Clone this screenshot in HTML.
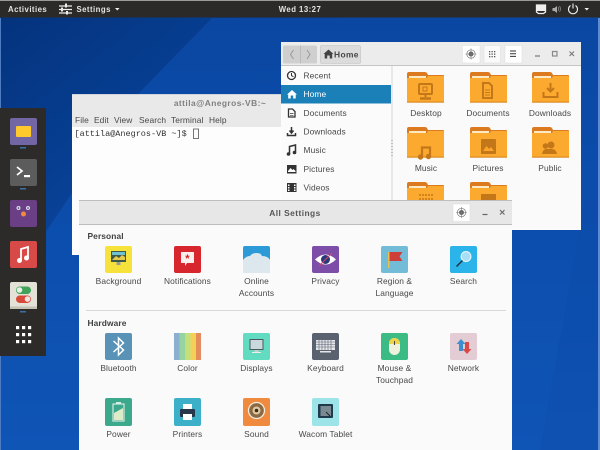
<!DOCTYPE html>
<html><head><meta charset="utf-8"><style>
html,body{margin:0;padding:0;background:#0b4aa8;width:600px;height:450px;overflow:hidden}
svg{display:block;filter:blur(.3px)}
text{font-family:"Liberation Sans",sans-serif;font-size:8.4px;fill:#484848;letter-spacing:.1px}
.c{text-anchor:middle}
.b{font-weight:bold;fill:#404040}
.t{fill:#e4e4e4;font-weight:bold;font-size:7.8px;letter-spacing:.45px}
.h{fill:#555;font-weight:bold;letter-spacing:.45px}
.m{font-family:"Liberation Mono",monospace;font-size:8.5px;letter-spacing:0;fill:#333}
</style></head><body>
<svg width="600" height="450" viewBox="0 0 600 450" xmlns="http://www.w3.org/2000/svg">
<defs>
<linearGradient id="bg" x1="0" y1="0" x2="1" y2="1"><stop offset="0" stop-color="#04327c"/><stop offset=".45" stop-color="#0a4aa6"/><stop offset="1" stop-color="#0f56b8"/></linearGradient>
<linearGradient id="rt" x1="0" y1="0" x2="0" y2="1"><stop offset="0" stop-color="#0a47a2"/><stop offset=".45" stop-color="#0c4dac"/><stop offset="1" stop-color="#0f55b6"/></linearGradient>
<g id="folder">
<path d="M0 2q0-2 2-2h16q2 0 3 3h15q1 0 1 1v5H0z" fill="#dc7a20"/>
<rect x="2" y="4" width="17" height="2" fill="#fde9c4"/>
<path d="M0 6h20l1-2h15q1 0 1 1v25H0z" fill="#fca92f"/>
<rect x="0" y="29.500" width="37" height="1.200" fill="#dc8a20"/>
</g>
</defs>
<rect width="600" height="450" fill="url(#bg)"/>
<polygon points="212,18 600,18 600,450 0,450 0,300 140,92" fill="url(#rt)"/>
<polygon points="585,200 600,200 600,450 540,450" fill="#0a48a2" opacity=".25"/>
<rect x="598" y="18" width="2" height="432" fill="#5f8bd0"/>
<rect y="18" width="1" height="432" fill="#4f7cc0"/>

<!-- top bar -->
<rect width="600" height="17.500" fill="#2b2a29"/>
<rect width="600" height="1" fill="#9a9a9a"/>
<text x="8" y="12" class="t">Activities</text>
<g stroke="#eee" stroke-width="1.200" fill="#eee"><path d="M59 6h13M59 9.500h13M59 13h13"/><rect x="65" y="3.500" width="2" height="4" stroke="none"/><rect x="61" y="7.500" width="2" height="4" stroke="none"/><rect x="66" y="11" width="2" height="3.500" stroke="none"/></g>
<text x="76.500" y="12" class="t">Settings</text>
<path d="M115 8h4.500l-2.200 2.500z" fill="#eee"/>
<text x="300" y="12" class="t c">Wed 13:27</text>
<path d="M536.500 5h9v7l-2 1.500h-5l-2-1.500z" fill="none" stroke="#eee" stroke-width="1.300"/><path d="M537 5h8v6h-8z" fill="#eee"/>
<path d="M552.500 8h2l2.500-2v7l-2.500-2h-2z" fill="#aaa"/><path d="M558 7q1.500 2 0 3.800M559.500 6q2 3 0 5.800" stroke="#888" fill="none" stroke-width=".8"/>
<path d="M570.500 5.500a4.500 4.500 0 1 0 5 0" fill="none" stroke="#eee" stroke-width="1.100"/><path d="M573 3.500v5" stroke="#eee" stroke-width="1.100"/>
<path d="M584.500 8h4.500l-2.200 2.500z" fill="#eee"/>

<!-- dock -->
<rect x="0" y="108" width="46" height="248" fill="#2c2b2a"/>
<rect x="10" y="118" width="27" height="27" rx="2" fill="#7266a4"/>
<rect x="16" y="126" width="15" height="11" rx="1" fill="#fdc92d"/>
<rect x="20" y="147" width="6" height="1.500" fill="#3c6fa8"/>
<rect x="10" y="159" width="27" height="27" rx="2" fill="#5c5c5c"/>
<path d="M17 167l5 4-5 4" stroke="#fff" stroke-width="1.700" fill="none"/><rect x="24" y="175" width="6" height="2.200" fill="#fff"/>
<rect x="20" y="188" width="6" height="1.500" fill="#3c6fa8"/>
<rect x="10" y="200" width="27" height="27" rx="2" fill="#6a3f85"/>
<circle cx="18.500" cy="208" r="2" fill="#dde"/><circle cx="28" cy="208" r="2" fill="#dde"/><circle cx="18.500" cy="208" r=".8" fill="#334"/><circle cx="28" cy="208" r=".8" fill="#334"/><circle cx="23.500" cy="214" r="2.500" fill="#f08c3c"/>
<rect x="10" y="241" width="27" height="27" rx="2" fill="#d84a48"/>
<path d="M21 261v-12l7-2v11" stroke="#fff" stroke-width="1.800" fill="none"/><circle cx="19.500" cy="260.500" r="2.500" fill="#fff"/><circle cx="26.500" cy="258" r="2.500" fill="#fff"/>
<rect x="10" y="282" width="27" height="27" rx="2" fill="#e4e2d6"/><rect x="10" y="306.500" width="27" height="2.500" fill="#c4c2b4"/>
<rect x="16" y="286.500" width="15" height="7.500" rx="3.700" fill="#3fa35a"/><circle cx="19.500" cy="290" r="2.800" fill="#e8f0e8"/>
<rect x="16" y="295.500" width="15" height="7.500" rx="3.700" fill="#d9493a"/><circle cx="27.500" cy="299" r="2.800" fill="#f0e4e0"/>
<rect x="20" y="311" width="6" height="1.500" fill="#3c6fa8"/>
<g fill="#fff"><rect x="16" y="326" width="3.200" height="3.200"/><rect x="22" y="326" width="3.200" height="3.200"/><rect x="28" y="326" width="3.200" height="3.200"/><rect x="16" y="333" width="3.200" height="3.200"/><rect x="22" y="333" width="3.200" height="3.200"/><rect x="28" y="333" width="3.200" height="3.200"/><rect x="16" y="340" width="3.200" height="3.200"/><rect x="22" y="340" width="3.200" height="3.200"/><rect x="28" y="340" width="3.200" height="3.200"/></g>

<!-- terminal -->
<rect x="72" y="94" width="215" height="161" fill="#fdfdfd"/>
<rect x="72" y="94" width="215" height="33" fill="#e9e9e9"/>
<rect x="72" y="94" width="215" height="1" fill="#cfd4dc"/>
<text x="220" y="106" class="c h" style="fill:#808080">attila@Anegros-VB:~</text>
<text x="75" y="123">File</text><text x="94" y="123">Edit</text><text x="114" y="123">View</text><text x="139" y="123">Search</text><text x="171" y="123">Terminal</text><text x="209" y="123">Help</text>
<text x="74.500" y="136" class="m">[attila@Anegros-VB ~]$</text>
<rect x="193.500" y="129" width="5" height="9.500" fill="none" stroke="#555" stroke-width=".8"/>

<!-- files -->
<rect x="281" y="42" width="300" height="188" fill="#fafafa"/>
<rect x="281" y="42" width="300" height="23.500" fill="#ececec"/>
<rect x="281" y="65" width="300" height="1" fill="#c6c6c6"/>
<rect x="283" y="45.500" width="34" height="18" rx="1.500" fill="#cfcfcf"/><rect x="300" y="45.500" width="1" height="18" fill="#bbb"/>
<path d="M293.500 50l-3 4.500 3 4.500M307 50l3 4.500-3 4.500" fill="none" stroke="#9a9a9a"/>
<rect x="320.500" y="45.500" width="40" height="18" rx="1.500" fill="#dcdcdc" stroke="#c0c0c0" stroke-width=".6"/>
<path d="M323.500 54l5-4.500 5 4.500h-1.300v4.500h-2.500v-3h-2.500v3h-2.500v-4.500z" fill="#444"/>
<text x="334" y="57.500" style="fill:#444;font-weight:bold;letter-spacing:.4px">Home</text>
<rect x="462.500" y="45.500" width="17.500" height="17.500" fill="#fff" stroke="#ddd" stroke-width=".5"/>
<circle cx="471" cy="54" r="2.500" fill="#666"/><circle cx="471" cy="54" r="4.200" fill="none" stroke="#777" stroke-width=".7"/><path d="M471 48.500v11M465.500 54h11" stroke="#777" stroke-width=".6"/>
<rect x="484" y="45.500" width="16.500" height="17.500" fill="#fafafa" stroke="#ddd" stroke-width=".5"/>
<g fill="#555"><rect x="489" y="51" width="1.300" height="1.300"/><rect x="491.500" y="51" width="1.300" height="1.300"/><rect x="494" y="51" width="1.300" height="1.300"/><rect x="489" y="53.500" width="1.300" height="1.300"/><rect x="491.500" y="53.500" width="1.300" height="1.300"/><rect x="494" y="53.500" width="1.300" height="1.300"/><rect x="489" y="56" width="1.300" height="1.300"/><rect x="491.500" y="56" width="1.300" height="1.300"/><rect x="494" y="56" width="1.300" height="1.300"/></g>
<rect x="505" y="45.500" width="17" height="17.500" fill="#fff" stroke="#ddd" stroke-width=".5"/>
<path d="M510 51h6M510 53.700h6M510 56.400h6" stroke="#333" stroke-width="1"/>
<path d="M535 56h5" stroke="#777" stroke-width="1.200"/>
<rect x="552.500" y="51.500" width="4.500" height="4.500" fill="none" stroke="#888" stroke-width="1.200"/>
<path d="M569.500 51.500l4.500 4.500M574 51.500l-4.500 4.500" stroke="#777" stroke-width="1.100"/>
<!-- sidebar -->
<rect x="281" y="66" width="110" height="164" fill="#fbfbfb"/>
<rect x="391" y="66" width="2" height="164" fill="#e8e8e8"/>
<path d="M392 140v18" stroke="#999" stroke-width="1" stroke-dasharray="1 2"/>
<rect x="281" y="85" width="110" height="18.500" fill="#1b80b7"/>
<circle cx="291.500" cy="75.500" r="4" fill="none" stroke="#333" stroke-width="1.300"/><path d="M291.500 73v2.700l2 1" fill="none" stroke="#333"/>
<text x="303.500" y="78.500">Recent</text>
<path d="M287 94.500l5-4.500 5 4.500h-1.300v4h-2.500v-3h-2.500v3h-2.500v-4z" fill="#fff"/>
<text x="303.500" y="97" style="fill:#fff">Home</text>
<path d="M288.500 109h4l2.500 2.500v5.500h-6.500z" fill="none" stroke="#333" stroke-width="1.300"/><path d="M290 113.500h3.500M290 115.300h3.500" stroke="#333" stroke-width=".7"/>
<text x="303.500" y="116">Documents</text>
<path d="M291.500 127v5M289.500 130.500l2 2.500 2-2.500" stroke="#333" stroke-width="1.500" fill="none"/><path d="M287.500 133v2.500h8v-2.500" stroke="#333" stroke-width="1.500" fill="none"/>
<text x="303.500" y="134.500">Downloads</text>
<path d="M289.500 154v-7.500l6-1.500v7.500" stroke="#333" stroke-width="1.500" fill="none"/><circle cx="288.500" cy="154" r="1.800" fill="#333"/><circle cx="294.500" cy="152.500" r="1.800" fill="#333"/>
<text x="303.500" y="153">Music</text>
<rect x="287" y="165" width="9.500" height="8.500" fill="#333"/><path d="M288 171l2.500-3 2 2 1-1 2 2v1h-7.500z" fill="#fff"/>
<text x="303.500" y="172">Pictures</text>
<rect x="287" y="183" width="9.500" height="9" fill="#333"/><path d="M288 184.500h1.500v1.500H288zM288 187h1.500v1.500H288zM288 189.500h1.500V191H288zM294 184.500h1.500v1.500H294zM294 187h1.500v1.500H294zM294 189.500h1.500V191H294z" fill="#fff"/>
<text x="303.500" y="190.500">Videos</text>
<!-- folders -->
<use href="#folder" x="407" y="72"/><use href="#folder" x="470" y="72"/><use href="#folder" x="532" y="72"/>
<use href="#folder" x="407" y="127"/><use href="#folder" x="470" y="127"/><use href="#folder" x="532" y="127"/>
<use href="#folder" x="407" y="182"/><use href="#folder" x="470" y="182"/>
<g fill="none" stroke="#c47718" stroke-width="2">
<rect x="419" y="84" width="13" height="10" rx="1"/><path d="M425.500 94v3" /><path d="M420 98.500h11" stroke-width="2.500"/><rect x="423" y="87" width="4" height="4" stroke-width="1"/>
<path d="M483 83h6l3 3v12h-9z"/><path d="M485 90h5M485 92.500h5M485 95h5" stroke-width="1"/>
<path d="M550.500 83v8M547 88l3.500 3.500L554 88M543.500 92v5h14v-5"/>
</g>
<path d="M422 157v-9.500h8v9" stroke="#c47718" stroke-width="2.200" fill="none"/><circle cx="420.500" cy="157" r="2.700" fill="#c47718"/><circle cx="428.500" cy="156.500" r="2.700" fill="#c47718"/>
<rect x="481" y="139" width="15" height="15" rx="1" fill="#c47718"/><path d="M483 151l3.500-5 2.500 3 2-2 3 4z" fill="#fba52c"/>
<circle cx="551" cy="145" r="3.500" fill="#c47718"/><circle cx="545.500" cy="146" r="2.800" fill="#c47718"/><path d="M542 154q1-5 4-5h6q4 0 5 5z" fill="#c47718"/>
<path d="M419 195h14M419 199h14" stroke="#c47718" stroke-width="1.500" stroke-dasharray="2 1"/>
<rect x="481" y="194" width="15" height="8" fill="#c47718"/>
<text x="426" y="116" class="c">Desktop</text><text x="488" y="116" class="c">Documents</text><text x="550" y="116" class="c">Downloads</text>
<text x="426" y="171" class="c">Music</text><text x="488" y="171" class="c">Pictures</text><text x="550" y="171" class="c">Public</text>

<!-- settings -->
<rect x="79" y="200" width="433" height="250" fill="#fafafa"/>
<rect x="79" y="200" width="433" height="24" fill="#e7e7e7"/>
<rect x="79" y="200" width="433" height="1" fill="#bdbdbd"/>
<rect x="79" y="224" width="433" height="1" fill="#bcbcbc"/>
<text x="295" y="216" class="c h">All Settings</text>
<rect x="453" y="204" width="17" height="17.500" fill="#fff" stroke="#ddd" stroke-width=".5"/>
<circle cx="461.500" cy="212.500" r="2.500" fill="#666"/><circle cx="461.500" cy="212.500" r="4.200" fill="none" stroke="#777" stroke-width=".7"/><path d="M461.500 207v11M456 212.500h11" stroke="#777" stroke-width=".6"/>
<path d="M482.500 214.500h5" stroke="#666" stroke-width="1.200"/>
<path d="M500 210l4.500 4.500M504.500 210l-4.500 4.500" stroke="#666" stroke-width="1.100"/>
<text x="87.500" y="239" class="b">Personal</text>
<text x="87.500" y="326" class="b">Hardware</text>
<rect x="86" y="310" width="420" height="1" fill="#d8d8d8"/>

<!-- Background -->
<rect x="105" y="246" width="27" height="27" rx="2" fill="#f6e23a"/>
<rect x="111" y="251" width="15" height="11" fill="#3c5a4a"/><path d="M112 260l4-4 3 2 3-3 3 2v3z" fill="#e8c84a"/><rect x="112" y="252" width="13" height="3" fill="#6fc0d0"/><rect x="116.500" y="262" width="4" height="3" fill="#999"/>
<!-- Notifications -->
<rect x="174" y="246" width="27" height="27" rx="2" fill="#d8262f"/>
<path d="M181 252h13v11h-7l-2 3v-3h-4z" fill="#fdeeee"/><text x="187.500" y="262" class="c" style="fill:#c22;font-size:11px;font-weight:bold">*</text>
<!-- Online -->
<rect x="243" y="246" width="27" height="27" rx="2" fill="#2d9ad8"/>
<path d="M243 269v-9q3-4 7-4 2-3 7-3 4 0 5 3 6 0 8 4v13h-27z" fill="#dde8ee"/>
<!-- Privacy -->
<rect x="312" y="246" width="27" height="27" rx="2" fill="#7c4ea8"/>
<path d="M315 259.500q10.500-10 21 0-10.500 10-21 0z" fill="#fff"/><circle cx="325.500" cy="259.500" r="4.500" fill="#2a3a78"/><path d="M319 266l13-13" stroke="#d8456a" stroke-width="1"/>
<!-- Region -->
<rect x="381" y="246" width="27" height="27" rx="2" fill="#72bcd8"/>
<rect x="388" y="252" width="1.500" height="16" fill="#e8c050"/><path d="M389.500 252h13l-3 4.500 3 4.500h-13z" fill="#cf3f3a"/>
<!-- Search -->
<rect x="450" y="246" width="27" height="27" rx="2" fill="#2ab4ea"/>
<circle cx="466" cy="256.500" r="5" fill="#a8dff5" stroke="#e8f7fd"/><path d="M462.500 260.500l-6 6" stroke="#234" stroke-width="1.500"/>
<!-- Bluetooth -->
<rect x="105" y="333" width="27" height="27" rx="2" fill="#5892b6"/>
<path d="M113.500 341l10 9-5 5v-17l5 5-10 9" fill="none" stroke="#fff" stroke-width="1.500"/>
<!-- Color -->
<rect x="174" y="333" width="5.500" height="27" fill="#8eaed0"/><rect x="179.500" y="333" width="5.500" height="27" fill="#95d4a0"/><rect x="185" y="333" width="5.500" height="27" fill="#c4e07c"/><rect x="190.500" y="333" width="5.500" height="27" fill="#f4d058"/><rect x="196" y="333" width="5" height="27" fill="#e48c5c"/>
<!-- Displays -->
<rect x="243" y="333" width="27" height="27" rx="2" fill="#62dcc0"/>
<rect x="249.500" y="339" width="14" height="11" fill="#4a5a60"/><rect x="250.500" y="340" width="12" height="9" fill="#c8d8dc"/><rect x="254.500" y="350" width="4" height="2" fill="#ccc"/><rect x="252" y="352" width="9" height="1" fill="#eee"/>
<!-- Keyboard -->
<rect x="312" y="333" width="27" height="27" rx="2" fill="#5a6270"/>
<rect x="316" y="340" width="19" height="10" fill="#e4e6ea"/><path d="M316 342h19M316 344.500h19M316 347h19M319 340v10M322 340v10M325 340v10M328 340v10M331 340v10" stroke="#5a6270" stroke-width=".6"/><rect x="320" y="351" width="11" height="1.500" fill="#e4e6ea"/>
<!-- Mouse -->
<rect x="381" y="333" width="27" height="27" rx="2" fill="#3cbc84"/>
<rect x="389" y="338" width="11" height="17" rx="5.500" fill="#eef2dc"/><path d="M389 344v-.5a5.500 5.500 0 0 1 11 0v.5z" fill="#eed44a"/><rect x="394" y="341" width="1" height="4" fill="#444"/>
<!-- Network -->
<rect x="450" y="333" width="27" height="27" rx="2" fill="#e4ccd4"/>
<path d="M461 339l4.500 5h-2.500v7h-4v-7h-2.500z" fill="#3c90d0"/><path d="M467 354l-4.500-5h2.500v-7h4v7h2.500z" fill="#d84a48"/>
<!-- Power -->
<rect x="105" y="398" width="27" height="28" rx="2" fill="#3ca88c"/>
<rect x="113" y="404" width="11" height="17" fill="none" stroke="#d4ece2" stroke-width="1.200"/><rect x="116" y="402" width="5" height="2" fill="#d4ece2"/><path d="M114 420v-7l9-5v12z" fill="#dcecc8"/>
<!-- Printers -->
<rect x="174" y="398" width="27" height="28" rx="2" fill="#3cb0c8"/>
<rect x="183" y="404" width="9" height="6" fill="#fff"/><rect x="180" y="409" width="15" height="8" rx="1" fill="#28384a"/><rect x="183" y="414" width="9" height="6" fill="#fff"/>
<!-- Sound -->
<rect x="243" y="398" width="27" height="28" rx="2" fill="#f08a3e"/>
<circle cx="256.500" cy="410.500" r="8" fill="#8a6a44" stroke="#f4ecdc" stroke-width="1.300"/><circle cx="256.500" cy="410.500" r="4" fill="#e0c8a0"/><circle cx="256.500" cy="410.500" r="1.800" fill="#3a2a1a"/>
<!-- Wacom -->
<rect x="312" y="398" width="27" height="28" rx="2" fill="#9ce4e8"/>
<rect x="318" y="404" width="15" height="14" rx="1" fill="#1f3a4a"/><rect x="320.500" y="406" width="10.500" height="10" fill="#7a8a92"/><path d="M326 412l4 4" stroke="#222"/>

<g class="c">
<text x="118.500" y="284" class="c">Background</text>
<text x="187.500" y="284" class="c">Notifications</text>
<text x="256.500" y="284" class="c">Online</text><text x="256.500" y="296" class="c">Accounts</text>
<text x="325.500" y="284" class="c">Privacy</text>
<text x="394.500" y="284" class="c">Region &amp;</text><text x="394.500" y="296" class="c">Language</text>
<text x="463.500" y="284" class="c">Search</text>
<text x="118.500" y="371" class="c">Bluetooth</text>
<text x="187.500" y="371" class="c">Color</text>
<text x="256.500" y="371" class="c">Displays</text>
<text x="325.500" y="371" class="c">Keyboard</text>
<text x="394.500" y="371" class="c">Mouse &amp;</text><text x="394.500" y="383" class="c">Touchpad</text>
<text x="463.500" y="371" class="c">Network</text>
<text x="118.500" y="437" class="c">Power</text>
<text x="187.500" y="437" class="c">Printers</text>
<text x="256.500" y="437" class="c">Sound</text>
<text x="325.500" y="437" class="c">Wacom Tablet</text>
</g>
</svg>
</body></html>
